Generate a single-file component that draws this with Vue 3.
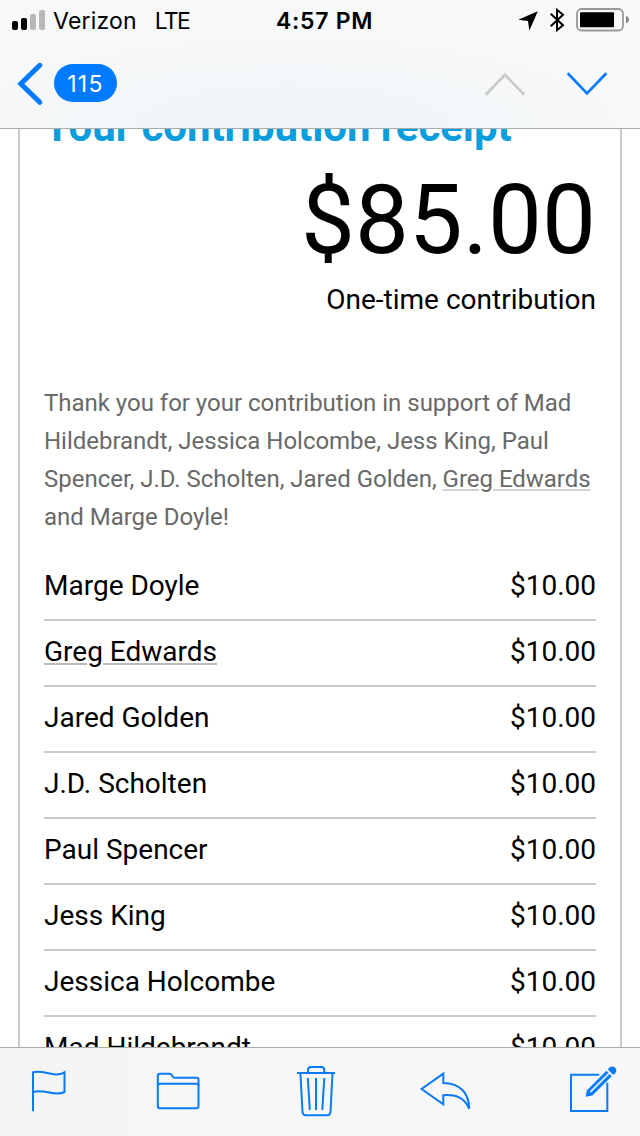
<template>
  <div class="screen">
    <header class="header">
      <!-- Status bar -->
      <div class="status-bar">
        <div class="carrier">
          <svg class="signal" width="34" height="22" viewBox="0 0 34 22">
            <rect x="0" y="12" width="6" height="9" rx="2" fill="#000" />
            <rect x="9" y="9" width="6" height="12" rx="2" fill="#000" />
            <rect x="18" y="5" width="6" height="16" rx="2" fill="#b8b8b9" />
            <rect x="27" y="1" width="6" height="20" rx="2" fill="#b8b8b9" />
          </svg>
          <span class="carrier-name">Verizon</span>
          <span class="network">LTE</span>
        </div>
        <div class="time">4:57 PM</div>
        <div class="indicators">
          <svg class="location" width="20" height="20" viewBox="0 0 20 20">
            <path d="M19.8 0.3L11.3 19.8L10 10L0.2 8.7Z" fill="#000" />
          </svg>
          <svg class="bluetooth" width="16" height="26" viewBox="0 0 16 26">
            <path
              d="M1.7 6.8L14 18.2L8 23.2V2.8L14 7.8L1.7 19.2"
              fill="none"
              stroke="#000"
              stroke-width="2"
            />
          </svg>
          <svg class="battery" width="54" height="24" viewBox="0 0 54 24">
            <rect x="1" y="1" width="46" height="21.5" rx="4.5" fill="none" stroke="#98989a" stroke-width="1.8" />
            <rect x="4" y="4.2" width="34" height="15" rx="1" fill="#000" />
            <path d="M50 8C52.2 8.6 53 10 53 11.6S52.2 14.7 50 15.3Z" fill="#858587" />
          </svg>
        </div>
      </div>

      <!-- Mail navigation -->
      <nav class="nav-bar">
        <svg class="back" width="28" height="46" viewBox="0 0 28 46">
          <path d="M23.8 5.3L4.8 23.8L23.8 42.3" fill="none" stroke="#007aff" stroke-width="5" stroke-linecap="round" />
        </svg>
        <span class="unread">{{ unreadCount }}</span>
        <svg class="previous" width="42" height="26" viewBox="0 0 42 26">
          <path d="M1.7 24.8L21 4.8L40.3 24.8" fill="none" stroke="#c9cacc" stroke-width="2.7" />
        </svg>
        <svg class="next" width="42" height="26" viewBox="0 0 42 26">
          <path d="M1.7 3.2L21 23.4L40.3 3.2" fill="none" stroke="#087aff" stroke-width="2.7" />
        </svg>
      </nav>
    </header>

    <!-- Message body, scrolled under both bars -->
    <main class="message">
      <article class="receipt">
        <h1 class="title">Your contribution receipt</h1>
        <div class="amount">$85.00</div>
        <div class="frequency">One-time contribution</div>
        <p class="thanks">
          Thank you for your contribution in support of Mad<br />
          Hildebrandt, Jessica Holcombe, Jess King, Paul<br />
          Spencer, J.D. Scholten, Jared Golden, <span class="detected">Greg Edwards</span><br />
          and Marge Doyle!
        </p>
        <ul class="recipients">
          <li v-for="recipient in recipients" :key="recipient.name" class="recipient">
            <span :class="{ detected: recipient.detected }">{{ recipient.name }}</span>
            <span class="recipient-amount">{{ recipient.amount }}</span>
          </li>
        </ul>
      </article>
    </main>

    <footer class="toolbar">
      <svg class="flag" width="40" height="52" viewBox="0 0 40 52">
        <path d="M3 46.3V7.2C14 4 24 13.5 34.5 7.3V27C24 32.5 13 22.5 3 27.3" />
      </svg>
      <svg class="folder" width="46" height="52" viewBox="0 0 46 52">
        <path d="M2.8 41.3V10.7Q2.8 8.7 4.8 8.7H14.5Q16 8.7 16.8 10L17.8 11.7Q18.4 12.7 19.8 12.7H41.5Q43.5 12.7 43.5 14.7V41.3Q43.5 43.3 41.5 43.3H4.8Q2.8 43.3 2.8 41.3Z" />
        <path d="M2.8 20.7Q2.8 18.7 4.8 18.7H41.5Q43.5 18.7 43.5 20.7" />
      </svg>
      <svg class="trash" width="42" height="52" viewBox="0 0 42 52">
        <path d="M2 8H40M13 8V5Q13 1.9 16 1.9H26.3Q29.3 1.9 29.3 5V8" />
        <path d="M5.4 8L7.5 47Q7.7 50.2 10.8 50.2H32.2Q35.3 50.2 35.5 47L37.5 8" />
        <path d="M12.8 13L14.8 45M21 13V45M29.3 13L27.3 45" />
      </svg>
      <svg class="reply" width="54" height="52" viewBox="0 0 54 52">
        <path d="M25.3 8.6L3.6 24L25.3 39.4V30.2C37 29.5 46 31.5 51.2 43.8C51 28 42 18.2 25.3 18Z" />
      </svg>
      <svg class="compose" width="50" height="52" viewBox="0 0 50 52">
        <path d="M31.3 9.7H3V46H39.3V17.7" />
        <path class="solid" d="M17.6 31.8L19 25.2L38.4 5.8L43.8 11.2L24.4 30.4Z" />
        <path class="pencil-core" d="M22.3 27L41.3 8.2" />
        <path class="solid" d="M39.8 4.4L41.6 2.6Q44.3 0.2 47.2 2.8Q49.6 5.5 47.2 8.2L45.2 9.8Z" />
      </svg>
    </footer>
  </div>
</template>

<script setup>
import { ref } from 'vue';

const unreadCount = ref(115);

// Names flagged as detected get the soft underline Mail adds to contacts
const recipients = ref([
  { name: 'Marge Doyle', amount: '$10.00' },
  { name: 'Greg Edwards', amount: '$10.00', detected: true },
  { name: 'Jared Golden', amount: '$10.00' },
  { name: 'J.D. Scholten', amount: '$10.00' },
  { name: 'Paul Spencer', amount: '$10.00' },
  { name: 'Jess King', amount: '$10.00' },
  { name: 'Jessica Holcombe', amount: '$10.00' },
  { name: 'Mad Hildebrandt', amount: '$10.00' }
]);
</script>

<style>
body {
  margin: 0;
  background: #fff;
}
</style>

<style scoped>
.screen {
  display: flex;
  flex-direction: column;
  width: 640px;
  height: 1136px;
  overflow: hidden;
  background: #fff;
  font-family: Roboto, sans-serif;
  color: #000;
}

.header {
  flex: none;
  box-sizing: border-box;
  height: 129px;
  border-bottom: 1px solid #a9abad;
  background: radial-gradient(ellipse 360px 100px at 290px 129px, #f0f5f8, #f7f8f9);
  font-family: Inter, sans-serif;
}

.status-bar {
  display: flex;
  align-items: center;
  height: 40px;
}

.carrier {
  display: flex;
  align-items: center;
  width: 276px;
  font-size: 23px;
  line-height: 40px;
}

.signal {
  margin-left: 12px;
}

.carrier-name,
.network,
.time {
  padding-top: 2px;
}

.carrier-name {
  margin-left: 7px;
  letter-spacing: 0.2px;
}

.network {
  margin-left: 18px;
  letter-spacing: -1.8px;
}

.time {
  font-size: 23px;
  font-weight: 600;
  line-height: 40px;
  letter-spacing: 0.7px;
}

.indicators {
  display: flex;
  align-items: center;
  margin-left: auto;
  margin-right: 10px;
}

.location {
  margin-right: 11px;
  margin-top: 2px;
}

.bluetooth {
  margin-right: 11px;
}

.nav-bar {
  display: flex;
  align-items: center;
  height: 86px;
}

.back {
  margin-left: 16px;
}

.unread {
  width: 63px;
  height: 38px;
  margin-left: 10px;
  border-radius: 19px;
  background: #007aff;
  color: #fff;
  font-size: 23px;
  line-height: 40px;
  letter-spacing: 1.3px;
  text-align: center;
}

.previous {
  margin-left: auto;
}

.next {
  margin-left: 40px;
  margin-right: 32px;
}

.message {
  flex: 1;
  min-height: 0;
  overflow: hidden;
}

.receipt {
  height: 1100px;
  margin: 0 18px;
  padding: 0 24px;
  border: solid #c8cbcd;
  border-width: 0 2px;
}

.title {
  margin: -26px 0 21px;
  color: #0b9ddc;
  font-size: 42px;
  font-weight: 700;
  line-height: 48px;
  letter-spacing: -0.05px;
  white-space: nowrap;
}

/* The negative title margin would otherwise collapse through the card */
.message,
.receipt {
  display: flow-root;
}

.amount {
  font-size: 96px;
  line-height: 96px;
  text-align: right;
}

.frequency {
  margin-top: 13px;
  font-size: 28px;
  line-height: 38px;
  text-align: right;
}

.thanks {
  margin: 65px 0 0;
  color: #696969;
  font-size: 24px;
  line-height: 38px;
  letter-spacing: -0.02px;
  white-space: nowrap;
}

.recipients {
  margin: 19px 0 0;
  padding: 0;
  list-style: none;
}

.recipient {
  display: flex;
  align-items: center;
  justify-content: space-between;
  box-sizing: border-box;
  height: 66px;
  padding-bottom: 3px;
  border-bottom: 2px solid #c8cbcd;
  font-size: 28px;
  line-height: 38px;
}

.detected {
  text-decoration: underline;
  text-decoration-color: #bcbcbc;
  text-decoration-thickness: 2px;
  text-underline-offset: 2px;
}

.thanks .detected {
  text-decoration-color: #d2d2d2;
}

.toolbar {
  display: flex;
  flex: none;
  box-sizing: border-box;
  height: 89px;
  padding-top: 17px;
  border-top: 1px solid #a9abad;
  background: linear-gradient(90deg, #f4f4f4, #f7f7f7 45%, #f7f7f7);
}

.toolbar svg {
  flex: none;
  fill: none;
  stroke: #0a7bf5;
  stroke-width: 2;
}

.toolbar .solid {
  fill: #0a7bf5;
  stroke: none;
}

.toolbar .pencil-core {
  stroke: #d3e7fc;
  stroke-width: 1.8;
}

.flag {
  margin-left: 30px;
}

.folder {
  margin-left: 85px;
}

.trash {
  margin-left: 94px;
}

.reply {
  margin-left: 81px;
}

.compose {
  margin-left: 96px;
}
</style>
